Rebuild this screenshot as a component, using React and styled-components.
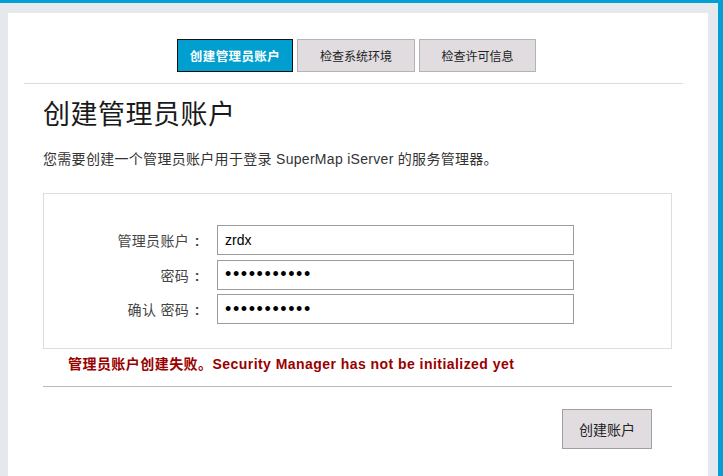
import React from "react";
import styled, { createGlobalStyle } from "styled-components";

const Global = createGlobalStyle`
  html, body { margin: 0; padding: 0; height: 100%; }
  body {
    background: #e5e8ed;
    font-family: "Liberation Sans", "Noto Sans CJK SC", sans-serif;
    color: #333;
  }
  #root { height: 100%; }
`;

const Frame = styled.div`
  box-sizing: border-box;
  height: 476px;
  border-top: 3px solid #009fd4;
  border-right: 5px solid #009fd4;
  padding: 10px 10px 0 8px;
  display: flex;
`;

const Panel = styled.div`
  flex: 1;
  background: #fff;
  padding: 26px 25px 0 16px;
  display: flex;
  flex-direction: column;
`;

const Tabs = styled.div`
  display: flex;
  justify-content: center;
  gap: 4px;
  padding-left: 6px;
`;

const Tab = styled.div`
  box-sizing: border-box;
  width: ${(p) => (p.$w ? p.$w : 116)}px;
  height: 33px;
  display: flex;
  align-items: center;
  justify-content: center;
  font-size: ${(p) => (p.$active ? 12.5 : 12)}px;
  font-weight: ${(p) => (p.$active ? 700 : 400)};
  letter-spacing: ${(p) => (p.$active ? "0.4px" : "0")};
  color: ${(p) => (p.$active ? "#fff" : "#222")};
  background: ${(p) => (p.$active ? "#009fcf" : "#e0dce0")};
  border: 1px solid ${(p) => (p.$active ? "#111" : "#b4b4b4")};
`;

const Rule = styled.div`
  height: 1px;
  background: ${(p) => p.$color || "#dcdcdc"};
  margin-top: ${(p) => p.$mt || 0}px;
`;

const Section = styled.div`
  padding: 0 11px 0 19px;
  display: flex;
  flex-direction: column;
`;

const Heading = styled.h1`
  margin: 15px 0 0 0;
  font-size: 27px;
  line-height: 32px;
  font-weight: 400;
  letter-spacing: 0.5px;
  color: #1a1a1a;
`;

const Desc = styled.p`
  margin: 19px 0 0 0;
  font-size: 14px;
  line-height: 18px;
  color: #333;
  letter-spacing: 0.3px;
`;

const Box = styled.div`
  margin-top: 25px;
  border: 1px solid #dddddd;
  padding: 31px 0 24px 0;
  display: grid;
  grid-template-columns: 161px 357px;
  column-gap: 12px;
  row-gap: 4.5px;
  align-items: center;
`;

const Label = styled.label`
  text-align: right;
  font-size: 14px;
  letter-spacing: 0.3px;
  color: #444;
  white-space: nowrap;
`;

const Colon = styled.span`
  display: inline-block;
  width: 16px;
  text-align: center;
  font-weight: 700;
  letter-spacing: 0;
`;

const Input = styled.input`
  box-sizing: border-box;
  width: 357px;
  height: 30px;
  border: 1px solid #9c9c9c;
  padding: 0 7px;
  font-family: "Liberation Sans", sans-serif;
  font-size: ${(p) => (p.type === "password" ? 18 : 14)}px;
  color: #000;
  background: #fff;
  outline: none;
  letter-spacing: ${(p) => (p.type === "password" ? "1.6px" : "0")};
`;

const ErrorText = styled.div`
  margin: 7px 0 0 25px;
  font-size: 14px;
  line-height: 16px;
  font-weight: 700;
  letter-spacing: 0.45px;
  color: #990000;
`;

const Actions = styled.div`
  display: flex;
  justify-content: flex-end;
  padding: 22px 20px 0 0;
`;

const Button = styled.button`
  box-sizing: border-box;
  width: 90px;
  height: 40px;
  background: #e0dce0;
  border: 1px solid #a0a0a0;
  font-family: "Liberation Sans", "Noto Sans CJK SC", sans-serif;
  font-size: 14px;
  color: #222;
  cursor: pointer;
`;

export default function App() {
  return (
    <>
      <Global />
      <Frame>
        <Panel>
          <Tabs>
            <Tab $active>创建管理员账户</Tab>
            <Tab $w={118}>检查系统环境</Tab>
            <Tab $w={117}>检查许可信息</Tab>
          </Tabs>
          <Rule $mt={11} />
          <Section>
            <Heading>创建管理员账户</Heading>
            <Desc>您需要创建一个管理员账户用于登录 SuperMap iServer 的服务管理器。</Desc>
            <Box>
              <Label>管理员账户<Colon>:</Colon></Label>
              <Input type="text" defaultValue="zrdx" />
              <Label>密码<Colon>:</Colon></Label>
              <Input type="password" defaultValue="zrdx1234567" />
              <Label>确认 密码<Colon>:</Colon></Label>
              <Input type="password" defaultValue="zrdx1234567" />
            </Box>
            <ErrorText>管理员账户创建失败。Security Manager has not be initialized yet</ErrorText>
            <Rule $mt={14} $color="#bbbbbb" />
            <Actions>
              <Button>创建账户</Button>
            </Actions>
          </Section>
        </Panel>
      </Frame>
    </>
  );
}
